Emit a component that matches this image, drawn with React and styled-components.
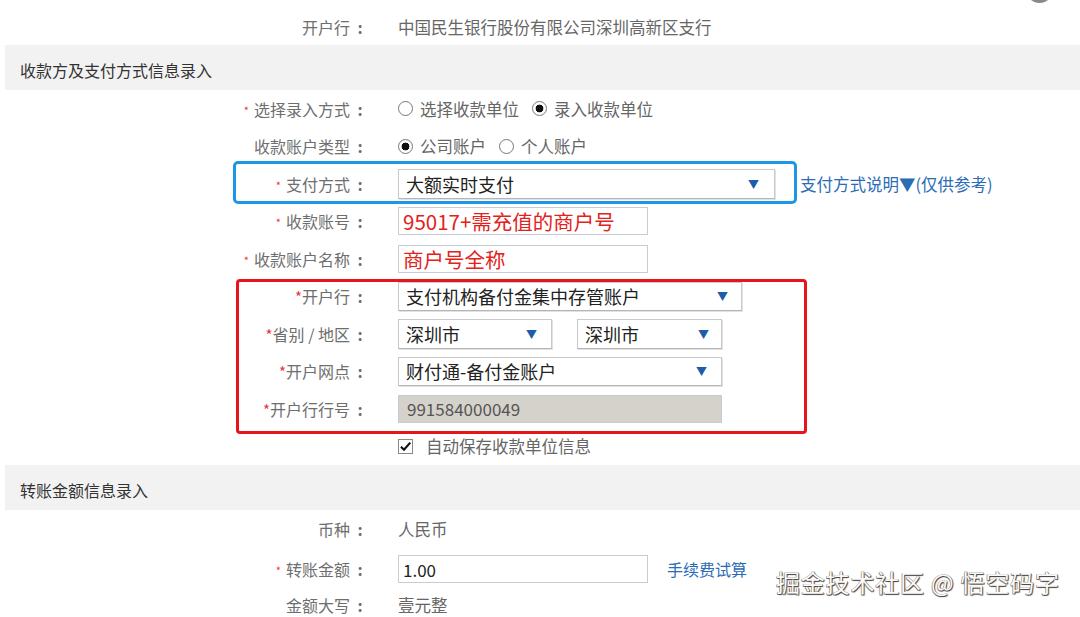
import React from "react";
import styled, { createGlobalStyle } from "styled-components";

const GlobalStyle = createGlobalStyle`
  html, body {
    margin: 0;
    padding: 0;
    background: #fff;
  }
  body {
    font-family: "Noto Sans CJK SC", "Microsoft YaHei", sans-serif;
    color: #666;
  }
`;

const Page = styled.div`
  position: relative;
  width: 1080px;
  height: 617px;
  overflow: hidden;
  padding-top: 8px;
  box-sizing: border-box;
`;

const Band = styled.div`
  margin-left: 5px;
  height: 45px;
  background: #f2f2f2;
  display: flex;
  align-items: center;
  padding: 4px 0 0 15px;
  box-sizing: border-box;
  font-size: 16px;
  color: #333;
`;

const Row = styled.div`
  position: relative;
  display: grid;
  grid-template-columns: 370px 1fr;
  column-gap: 28px;
  align-items: center;
  height: ${(p) => p.$h || 37.5}px;
`;

// 蓝色框标注（截图上画的框）
const BlueMark = styled.div`
  position: absolute;
  left: 233px;
  top: -4px;
  width: 564px;
  height: 43px;
  border: 3px solid #1e96e6;
  border-radius: 5px;
  box-sizing: border-box;
  pointer-events: none;
`;

const Group = styled.div`
  position: relative;
`;

// 红色框标注
const RedMark = styled.div`
  position: absolute;
  left: 236px;
  top: 1.5px;
  width: 571px;
  height: 155px;
  border: 3px solid #e8141c;
  border-radius: 4px;
  box-sizing: border-box;
  pointer-events: none;
`;

const Label = styled.div`
  text-align: right;
  font-size: 16px;
  color: #6e6e6e;
  white-space: nowrap;
`;

const Colon = styled.span`
  display: inline-block;
  width: 20px;
  text-align: center;
  font-weight: 700;
`;

const Star = styled.span`
  color: #e4393c;
  font-size: ${(p) => (p.$tight ? "15px" : "11px")};
  margin-right: ${(p) => (p.$tight ? "0" : "5px")};
  vertical-align: ${(p) => (p.$tight ? "baseline" : "1px")};
`;

const Value = styled.div`
  display: flex;
  align-items: center;
  gap: ${(p) => p.$gap || 0}px;
  font-size: 16.5px;
  color: #666;
  white-space: nowrap;
`;

const Select = styled.div`
  position: relative;
  width: ${(p) => p.$w}px;
  height: ${(p) => p.$hh || 30}px;
  box-sizing: border-box;
  border: 1px solid #c9c9c9;
  border-bottom-color: #b5b5b5;
  box-shadow: 1px 1px 0 #e2e2e2;
  background: #fff;
  display: flex;
  align-items: center;
  padding-left: 7px;
  font-size: 18px;
  color: #222;
`;

const Arrow = styled.span`
  position: absolute;
  right: ${(p) => p.$r || 15}px;
  top: 50%;
  transform: translateY(-50%);
  font-size: 11px;
  color: #1d5ca8;
`;

const Input = styled.div`
  width: ${(p) => p.$w}px;
  height: 28px;
  box-sizing: border-box;
  border: 1px solid #c6cdd6;
  background: ${(p) => (p.$disabled ? "#d5d2cc" : "#fff")};
  display: flex;
  align-items: center;
  padding-left: ${(p) => (p.$disabled ? 8 : 4)}px;
  font-size: ${(p) => p.$fs || 18}px;
  color: ${(p) => p.$color || "#222"};
`;

const Radio = styled.span`
  display: inline-flex;
  align-items: center;
  gap: 7px;
  margin-right: 13px;
  &::before {
    content: "";
    width: 15px;
    height: 15px;
    border-radius: 50%;
    border: 1px solid #777;
    box-sizing: border-box;
    background: ${(p) =>
      p.$on ? "radial-gradient(circle, #111 0 3.6px, #fff 4.2px)" : "#fff"};
  }
`;

const Check = styled.span`
  display: inline-flex;
  align-items: center;
  justify-content: center;
  width: 15px;
  height: 15px;
  border: 1px solid #888;
  box-sizing: border-box;
  margin-right: 13px;
  background: #fff;
`;

const Link = styled.span`
  font-size: ${(p) => p.$fs || 16}px;
  color: #2a6cb6;
`;

const Watermark = styled.div`
  position: absolute;
  left: 776px;
  top: 564px;
  font-size: 24px;
  color: #fafafa;
  letter-spacing: 0.8px;
  text-shadow: 1px 1px 1px #444, -0.5px -0.5px 0 #888, 0.5px -0.5px 0 #888,
    -0.5px 0.5px 0 #888;
`;

const CornerDot = styled.div`
  position: absolute;
  left: 1026px;
  top: -25px;
  width: 27px;
  height: 28px;
  border-radius: 50%;
  background: #8a8a8a;
  filter: blur(0.6px);
`;

const Field = ({ label, star, tight, h, children, gap }) => (
  <Row $h={h}>
    <Label>
      {star && <Star $tight={tight}>*</Star>}
      {label}
      <Colon>:</Colon>
    </Label>
    <Value $gap={gap}>{children}</Value>
  </Row>
);

export default function App() {
  return (
    <Page>
      <GlobalStyle />
      <CornerDot />
      <Field label="开户行" h={37}>
        中国民生银行股份有限公司深圳高新区支行
      </Field>

      <Band>收款方及支付方式信息录入</Band>

      <Field label="选择录入方式" star>
        <Radio>选择收款单位</Radio>
        <Radio $on>录入收款单位</Radio>
      </Field>
      <Field label="收款账户类型">
        <Radio $on>公司账户</Radio>
        <Radio>个人账户</Radio>
      </Field>
      <Row>
        <BlueMark />
        <Label>
          <Star>*</Star>支付方式<Colon>:</Colon>
        </Label>
        <Value $gap={25}>
          <Select $w={377}>
            大额实时支付
            <Arrow $r={15}>▼</Arrow>
          </Select>
          <Link $fs={16.5}>支付方式说明▼(仅供参考)</Link>
        </Value>
      </Row>
      <Field label="收款账号" star>
        <Input $w={250} $fs={20.5} $color="#e3221b">
          95017+需充值的商户号
        </Input>
      </Field>
      <Field label="收款账户名称" star>
        <Input $w={250} $fs={20.5} $color="#e3221b">
          商户号全称
        </Input>
      </Field>

      <Group>
        <RedMark />
        <Field label="开户行" star tight>
          <Select $w={344} $hh={29}>
            支付机构备付金集中存管账户
            <Arrow $r={13}>▼</Arrow>
          </Select>
        </Field>
        <Field label="省别 / 地区" star tight gap={25}>
          <Select $w={154}>
            深圳市
            <Arrow $r={14}>▼</Arrow>
          </Select>
          <Select $w={145}>
            深圳市
            <Arrow $r={12}>▼</Arrow>
          </Select>
        </Field>
        <Field label="开户网点" star tight>
          <Select $w={324} $hh={29}>
            财付通-备付金账户
            <Arrow $r={14}>▼</Arrow>
          </Select>
        </Field>
        <Field label="开户行行号" star tight>
          <Input $w={324} $disabled $fs={17} $color="#555">
            991584000049
          </Input>
        </Field>
      </Group>

      <Row>
        <span />
        <Value>
          <Check>
            <svg width="13" height="13" viewBox="0 0 12 12">
              <path
                d="M1.8 6.2 L4.6 9 L10.4 2.4"
                fill="none"
                stroke="#111"
                strokeWidth="2"
              />
            </svg>
          </Check>
          自动保存收款单位信息
        </Value>
      </Row>

      <Band>转账金额信息录入</Band>

      <Field label="币种">人民币</Field>
      <Field label="转账金额" star h={43} gap={19}>
        <Input $w={250} $fs={17}>
          1.00
        </Input>
        <Link>手续费试算</Link>
      </Field>
      <Field label="金额大写" h={28}>
        壹元整
      </Field>

      <Watermark>掘金技术社区 @ 悟空码字</Watermark>
    </Page>
  );
}
